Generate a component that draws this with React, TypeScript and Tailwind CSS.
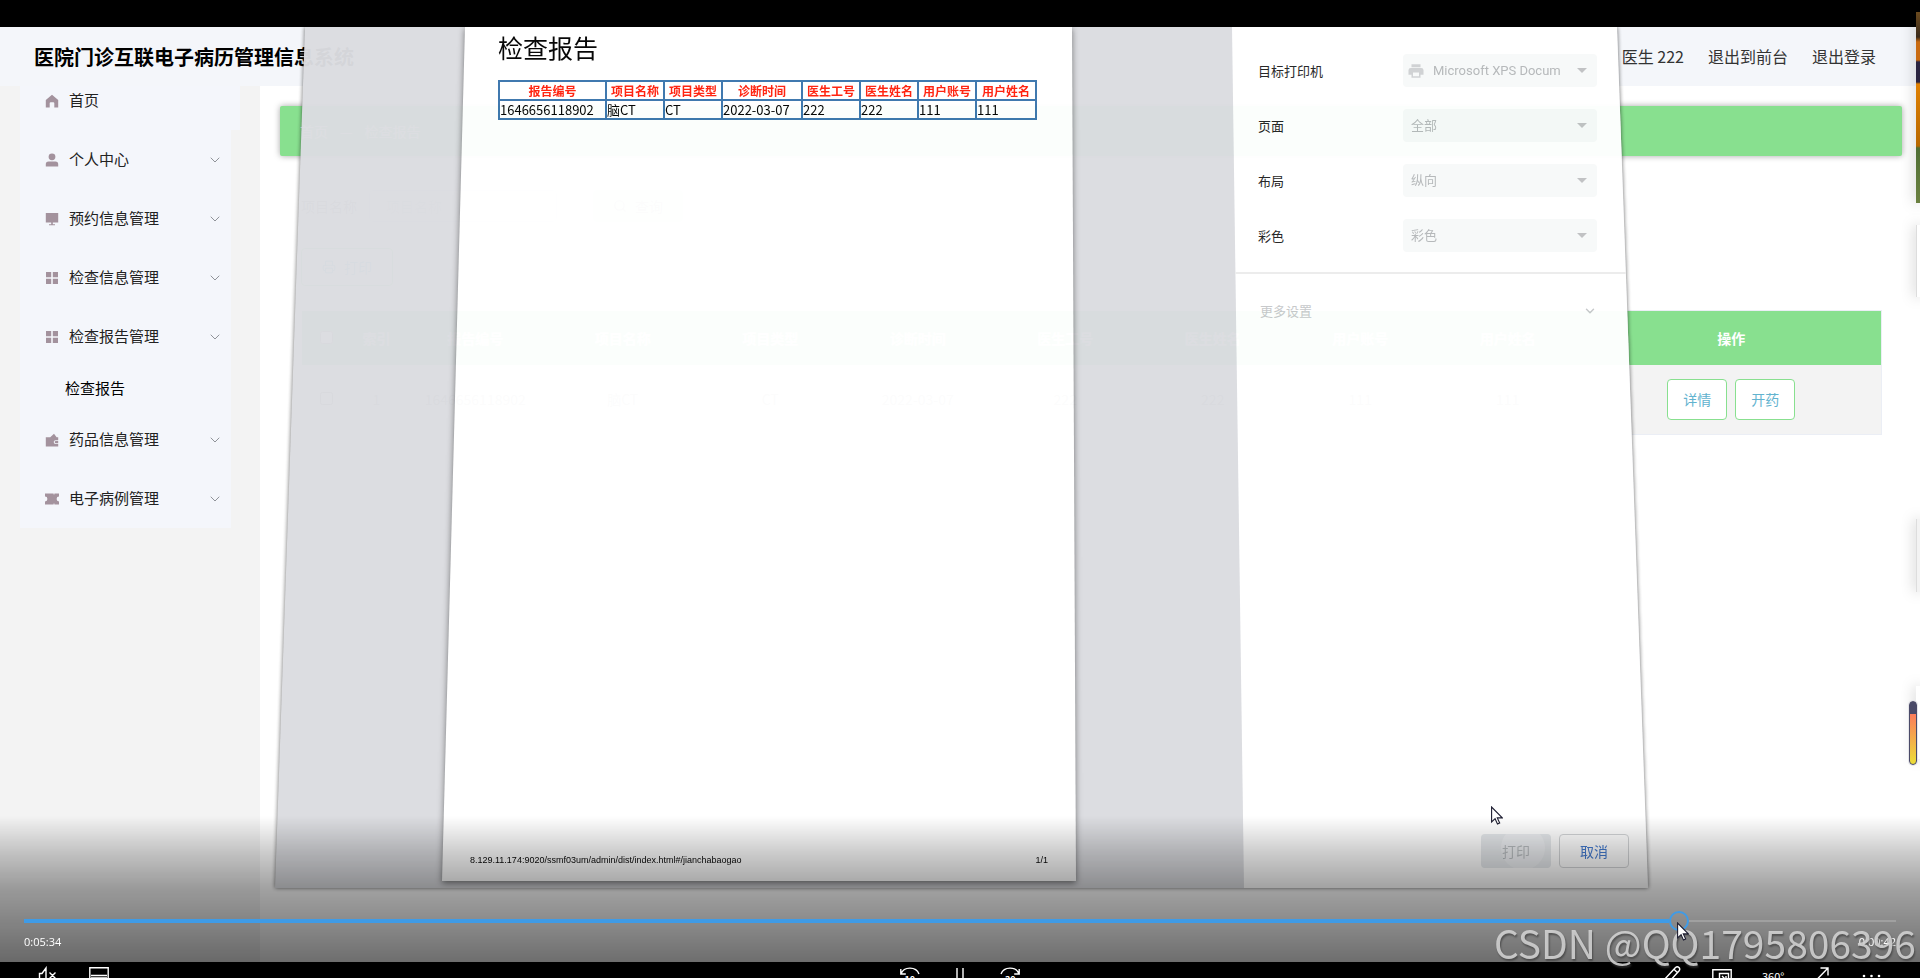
import { useState } from 'react'
import type { ReactNode } from 'react'
import { ChevronDown, Printer, Search } from 'lucide-react'

type MenuItem = {
  label: string
  icon: ReactNode
  children?: string[]
  leaf?: boolean
}

const svg = (body: ReactNode) => (
  <svg viewBox="0 0 14 14" className="h-3.5 w-3.5 shrink-0" fill="currentColor" aria-hidden="true">{body}</svg>
)

const gridIcon = svg(<path d="M1 1h5.2v5.2H1zM7.8 1H13v5.2H7.8zM1 7.8h5.2V13H1zM7.8 7.8H13V13H7.8z" />)

const menu: MenuItem[] = [
  { label: '首页', leaf: true, icon: svg(<path d="M7 .8 13.2 6v7.4H9.3V9.2a1 1 0 0 0-1-1H5.7a1 1 0 0 0-1 1v4.2H.8V6z" />) },
  { label: '个人中心', icon: svg(<><circle cx="7" cy="3.8" r="3.4" /><path d="M.8 13.4v-2a2.8 2.8 0 0 1 2.8-2.8h6.8a2.8 2.8 0 0 1 2.8 2.8v2z" /></>) },
  { label: '预约信息管理', icon: svg(<path d="M.8 1h12.4v9.6H.8zM6.2 10.6h1.6v1.6H10v1H4v-1h2.2z" />) },
  { label: '检查信息管理', icon: gridIcon },
  { label: '检查报告管理', icon: gridIcon, children: ['检查报告'] },
  { label: '药品信息管理', icon: svg(<path fillRule="evenodd" d="M.8 4.2h4.4L9 .8l2.6 3.4h1.6v3H10.6a1.9 1.9 0 0 0 0 3.8h2.6v2.4H.8zM10.8 8h2.4v2.2h-2.4a1.1 1.1 0 0 1 0-2.2z" />) },
  { label: '电子病例管理', icon: svg(<path d="M0 1.6h8.6v1h.8v-1H14v3a2.4 2.4 0 0 0 0 4.8v3H9.4v-1h-.8v1H0v-3a2.4 2.4 0 0 0 0-4.8z" />) },
]

const columns = ['报告编号', '项目名称', '项目类型', '诊断时间', '医生工号', '医生姓名', '用户账号', '用户姓名']
const row = ['1646656118902', '脑CT', 'CT', '2022-03-07', '222', '222', '111', '111']
const sheetWidths = ['w-[107px]', 'w-[58px]', 'w-[58px]', 'w-[80px]', 'w-[58px]', 'w-[58px]', 'w-[58px]', 'w-[60px]']

const printFields = [
  { id: 'printer', label: '目标打印机', value: 'Microsoft XPS Docum', printer: true },
  { id: 'pages', label: '页面', value: '全部' },
  { id: 'layout', label: '布局', value: '纵向' },
  { id: 'color', label: '彩色', value: '彩色' },
]

function Header() {
  return (
    <header className="flex h-[59px] shrink-0 items-center justify-between bg-[#f4f6fa] pr-11 pl-[34px]">
      <h1 className="text-xl font-bold text-black">医院门诊互联电子病历管理信息系统</h1>
      <nav className="flex gap-6 pb-0.5 text-base text-[#333]">
        <span>医生 222</span>
        <a href="#front">退出到前台</a>
        <a href="#logout">退出登录</a>
      </nav>
    </header>
  )
}

function Sidebar() {
  return (
    <aside className="w-[260px] shrink-0 overflow-hidden bg-[#f3f3f3] pl-5">
      {/* scrolled a little under the header */}
      <ul className="-mt-[15px] w-[211px] bg-[#f4f6fb] text-[15px] text-[#222]">
        {menu.map(m => (
          <li key={m.label}>
            <a
              href="#menu"
              className={`flex h-[59px] items-center gap-2.5 bg-[#f4f6fb] pr-2 pl-[25px] ${m.leaf ? 'w-[220px]' : ''}`}
            >
              <span className="text-[#a3929d]">{m.icon}</span>
              <span className="flex-1">{m.label}</span>
              {!m.leaf && <ChevronDown className="h-4 w-4 text-[#909399]" strokeWidth={1.5} />}
            </a>
            {m.children?.map(c => (
              <a key={c} href="#sub" className="flex h-[44px] items-center pl-[45px] text-black">{c}</a>
            ))}
          </li>
        ))}
      </ul>
    </aside>
  )
}

function ReportList() {
  return (
    <main className="min-w-0 flex-1 bg-white pt-5 pr-[18px] pl-5">
      <div className="flex h-[50px] items-center gap-3 rounded-xs bg-[#88e08f] px-5 text-sm text-white shadow-[0_0_6px_rgba(0,0,0,0.35)]">
        <span>首页</span>
        <span>—</span>
        <span>检查报告</span>
      </div>
      <div className="pr-5 pl-[21px]">
        <div className="mt-[34px] flex h-8 items-center gap-3 text-sm text-[#909399]">
          <label htmlFor="name">项目名称</label>
          <input id="name" placeholder="项目名称" className="h-8 w-[188px] rounded border border-[#dcdfe6] px-4" />
          <button className="ml-6 flex h-8 items-center gap-2 rounded bg-[#d8f3e0] px-5"><Search size={14} />查询</button>
        </div>
        <button className="mt-[26px] flex h-[38px] items-center gap-2 rounded border border-[#88e08f] px-5 text-sm text-[#67b6d1]">
          <Printer size={14} />打印
        </button>
        <table className="mt-6 w-full table-fixed border-collapse border border-[#ebeef5] text-center text-sm">
          <thead>
            <tr className="h-[54px] bg-[#88e08f] text-white">
              <th className="w-[50px]"><input type="checkbox" aria-label="全选" /></th>
              <th className="w-[50px]">索引</th>
              {columns.map(c => <th key={c}>{c}</th>)}
              <th className="w-[300px]">操作</th>
            </tr>
          </thead>
          <tbody>
            <tr className="h-[70px] bg-[#f3f3f3] text-[#909399]">
              <td><input type="checkbox" aria-label="选择" /></td>
              <td>1</td>
              {row.map((v, i) => <td key={i}>{v}</td>)}
              <td>
                <div className="flex justify-center gap-2">
                  {['详情', '开药'].map(b => (
                    <button key={b} className="h-[41px] w-[60px] rounded border border-[#88e08f] bg-white text-sm text-[#62b3cf]">{b}</button>
                  ))}
                </div>
              </td>
            </tr>
          </tbody>
        </table>
      </div>
    </main>
  )
}

function Sheet() {
  return (
    <div className="flex w-[634px] drop-shadow-[0_2px_3px_rgba(0,0,0,0.5)]">
      <div className="flex flex-1 flex-col bg-white pt-0.5 pr-7 pl-7 [clip-path:polygon(23px_0,630px_0,100%_100%,0_100%)]">
        <h2 className="pl-7 text-[25px] leading-9 text-black">检查报告</h2>
        <table className="mt-[15px] ml-7 w-[538px] table-fixed border-collapse text-black">
          <thead>
            <tr>
              {columns.map((c, i) => (
                <th key={c} className={`${sheetWidths[i]} h-[19px] border-2 border-[#3a75ad] p-0 text-xs leading-4 font-bold whitespace-nowrap text-[#ff1e0a]`}>{c}</th>
              ))}
            </tr>
          </thead>
          <tbody>
            <tr>
              {row.map((v, i) => (
                <td key={i} className="h-[19px] border-2 border-[#3a75ad] p-0 text-[13px] leading-4 whitespace-nowrap">{v}</td>
              ))}
            </tr>
          </tbody>
        </table>
        <div className="mt-auto flex justify-between pb-[14px] font-['Liberation_Sans',sans-serif] text-[9px] leading-[14px] text-black">
          <span>8.129.11.174:9020/ssmf03um/admin/dist/index.html#/jianchabaogao</span>
          <span>1/1</span>
        </div>
      </div>
    </div>
  )
}

function PrintDialog() {
  return (
    <div className="absolute inset-0 flex justify-center pb-[74px] pl-[3px]">
      <div className="flex w-[1373px] opacity-97 drop-shadow-[0_0_2px_rgba(0,0,0,0.6)]">
        <div className="flex flex-1 bg-[#dbdce0] [clip-path:polygon(30px_0,1342px_0,100%_100%,0_100%)]">
          <div className="flex flex-1 pb-[7px] pl-[167px]">
            <Sheet />
          </div>
          <form className="flex w-[416px] flex-col bg-white [clip-path:polygon(0_0,100%_0,100%_100%,12px_100%)]">
            <div className="flex flex-col gap-[22px] border-b-2 border-[#ececec] pt-[27px] pr-[51px] pb-5 pl-[26px] text-[13px]">
              {printFields.map(f => (
                <div key={f.id} className="flex h-[33px] items-center justify-between">
                  <label htmlFor={f.id} className="text-[#222]">{f.label}</label>
                  <div className="relative w-[194px]">
                    {f.printer && (
                      <svg viewBox="0 0 24 24" className="absolute top-2 left-1 h-[18px] w-[18px] text-[#cfd1d3]" fill="currentColor">
                        <path d="M19 8H5a3 3 0 0 0-3 3v6h4v4h12v-4h4v-6a3 3 0 0 0-3-3zm-3 11H8v-5h8zm2-16H6v4h12z" />
                      </svg>
                    )}
                    <select
                      id={f.id}
                      className={`h-[33px] w-full appearance-none rounded-sm bg-[#f7f9f9] font-[Roboto,'Noto_Sans_CJK_SC',sans-serif] text-[#b4b7b9] ${f.printer ? 'pl-[30px]' : 'pl-2'}`}
                    >
                      <option>{f.value}</option>
                    </select>
                    <svg viewBox="0 0 10 5" className="absolute top-3.5 right-2.5 h-[5px] w-2.5 text-[#bfc1c3]" fill="currentColor">
                      <path d="M0 0h10L5 5z" />
                    </svg>
                  </div>
                </div>
              ))}
            </div>
            <button type="button" className="mt-[19px] flex h-9 items-center justify-between pr-[51px] pl-7 text-[13px] text-[#c6c8ca]">
              更多设置
              <ChevronDown className="h-3.5 w-3.5" strokeWidth={2.5} />
            </button>
            <div className="mt-auto flex justify-end gap-2 pr-[19px] pb-5 text-sm">
              <button type="button" className="relative h-[34px] w-[70px] overflow-hidden rounded bg-[#e6e9ec] text-[#9aa1a6]">
                <span className="absolute -top-2 left-5 h-11 w-11 rounded-full bg-white/30" />
                打印
              </button>
              <button type="button" className="h-[34px] w-[70px] rounded border border-[#d2d4d6] text-[#3f78d0]">取消</button>
            </div>
          </form>
        </div>
      </div>
    </div>
  )
}

// previews and the gauge docked at the right edge of the desktop
function EdgeDock() {
  return (
    <div className="absolute top-3 right-0 flex w-[11px] flex-col items-end">
      <div className="h-[191px] w-1 bg-[linear-gradient(#6b4a1e_0,#3a2a1a_25px,#c96a10_30px,#c96a10_48px,#2a2440_50px,#2a2440_70px,#e08000_72px,#b86800_134px,#4f6f35_136px,#6b8040_100%)] shadow-[0_0_14px_rgba(0,0,0,0.35)]" />
      <div className="mt-[22px] h-[72px] w-1 border-l border-[#ddd] bg-white shadow-[0_0_14px_rgba(0,0,0,0.35)]" />
      <div className="mt-[222px] h-[73px] w-1 border-l border-[#ddd] bg-[#f3f3f3] shadow-[0_0_14px_rgba(0,0,0,0.35)]" />
      <div className="relative mt-[94px] h-[73px] w-1 bg-white shadow-[0_0_14px_rgba(0,0,0,0.35)]">
        <div className="absolute top-[15px] right-[3px] h-16 w-2 rounded-full border border-[#4a4a68] bg-[linear-gradient(#4a4a68_0,#4a4a68_12px,#fb7c5c_12px,#ecde38_100%)] ring-1 ring-[#e6e6ea]" />
      </div>
    </div>
  )
}

function Cursor({ className }: { className: string }) {
  return (
    <svg viewBox="0 0 12 19" className={`absolute h-[19px] w-3 ${className}`} aria-hidden="true">
      <path d="M.6 1v15l3.5-3.3 2.4 5.4 2.2-1-2.4-5.2h5z" fill="#fff" stroke="#1c1c30" strokeWidth="1.1" />
    </svg>
  )
}

function Timeline() {
  const duration = 376
  const [time, setTime] = useState(334)
  // the ring stays hollow, so both lines stop at its edge
  const pct = 88.4

  return (
    <div className="absolute inset-x-0 bottom-0 bg-[linear-gradient(transparent,rgba(0,0,0,0.2)_25%,rgba(0,0,0,0.37)_50%,rgba(0,0,0,0.46)_73%,rgba(0,0,0,0.57))] px-6 pt-[95px] pb-3">
      <div className="flex h-5 items-center">
        <div className="h-1 bg-[#3f9be6]" style={{ width: `calc(${pct}% - 10px)` }} />
        <input
          type="range"
          aria-label="进度"
          min={0}
          max={duration}
          value={time}
          onChange={e => setTime(Number(e.target.value))}
          className="h-5 w-5 appearance-none rounded-full border-2 border-[#3f9be6] bg-transparent [&::-webkit-slider-thumb]:appearance-none"
        />
        <div className="h-0.5 flex-1 bg-[#a0a0a0]" />
      </div>
      <div className="flex justify-between pt-[3px] font-['Open_Sans',sans-serif] text-[11px] leading-4 text-white">
        <span>0:05:34</span>
        <span>0:00:42</span>
      </div>
    </div>
  )
}

const ctl = (body: ReactNode) => (
  <svg viewBox="0 0 20 20" className="h-5 w-5" fill="none" stroke="#fff" strokeWidth="1.4" aria-hidden="true">{body}</svg>
)

function PlayerControls() {
  return (
    <footer className="grid h-4 shrink-0 grid-cols-3 items-start overflow-hidden bg-black px-[38px] pt-1">
      <div className="flex gap-[31px]">
        <button aria-label="静音">{ctl(<path d="M1.5 14V7.500h2.500L8 2v14M11.500 6.500l6 6M17.500 6.500l-6 6" />)}</button>
        <button aria-label="字幕">{ctl(<path d="M.8 1.800h18.400v15H.8zM2 9.500h16M2 12h16" />)}</button>
      </div>
      <div className="flex justify-center gap-[30px]">
        <button aria-label="后退10秒">
          {ctl(<><path d="M.8 3v5h5M1 7.800C4 .2 16 .2 19 8" /><text x="4.500" y="17" fontSize="9" fontWeight="bold" fill="#fff" stroke="none">10</text></>)}
        </button>
        <button aria-label="暂停">{ctl(<path d="M7 2v16M13 2v16" />)}</button>
        <button aria-label="前进30秒">
          {ctl(<><path d="M19.200 3v5h-5M19 7.800C16 .2 4 .2 1 8" /><text x="5" y="17" fontSize="9" fontWeight="bold" fill="#fff" stroke="none">30</text></>)}
        </button>
      </div>
      <div className="flex justify-end gap-[30px]">
        <button aria-label="编辑">{ctl(<path d="m2 14 11.500-12.500q1.800-1.500 3.500 0 1.500 1.800 0 3.500L6 17l-5 1zM12 3.200l3.500 3.500" />)}</button>
        <button aria-label="小窗">{ctl(<path d="M.8 3.800h18.400v14H.8zM7.500 7.500h9v8h-9zM10 10l4 4m0-4v4h-4" />)}</button>
        <button aria-label="360度" className="w-5 text-[11px] leading-5 whitespace-nowrap text-white">360°</button>
        <button aria-label="全屏">{ctl(<path d="M3 15.500 16 2M8.500 2H16v7.500" />)}</button>
        <button aria-label="更多">
          <svg viewBox="0 0 20 20" className="h-5 w-5" fill="#fff"><circle cx="2" cy="10" r="1.300" /><circle cx="9.500" cy="10" r="1.300" /><circle cx="17" cy="10" r="1.300" /></svg>
        </button>
      </div>
    </footer>
  )
}

export default function App() {
  return (
    <div className="relative flex h-screen flex-col overflow-hidden bg-black font-['Noto_Sans_CJK_SC',sans-serif]">
      <div className="h-[27px] shrink-0 bg-black" />
      <div className="relative flex min-h-0 flex-1 flex-col overflow-hidden bg-white">
        <Header />
        <div className="flex min-h-0 flex-1">
          <Sidebar />
          <ReportList />
        </div>
        <PrintDialog />
        <Cursor className="right-[417px] bottom-[137px]" />
        <Timeline />
      </div>
      <PlayerControls />
      <EdgeDock />
      <div className="absolute right-1 bottom-4 text-[39px] leading-10 whitespace-nowrap text-[#d2d2d2]/90 [text-shadow:1px_2px_2px_rgba(60,60,60,0.7)]">
        CSDN @QQ1795806396
      </div>
      <Cursor className="right-[231px] bottom-[37px]" />
    </div>
  )
}
